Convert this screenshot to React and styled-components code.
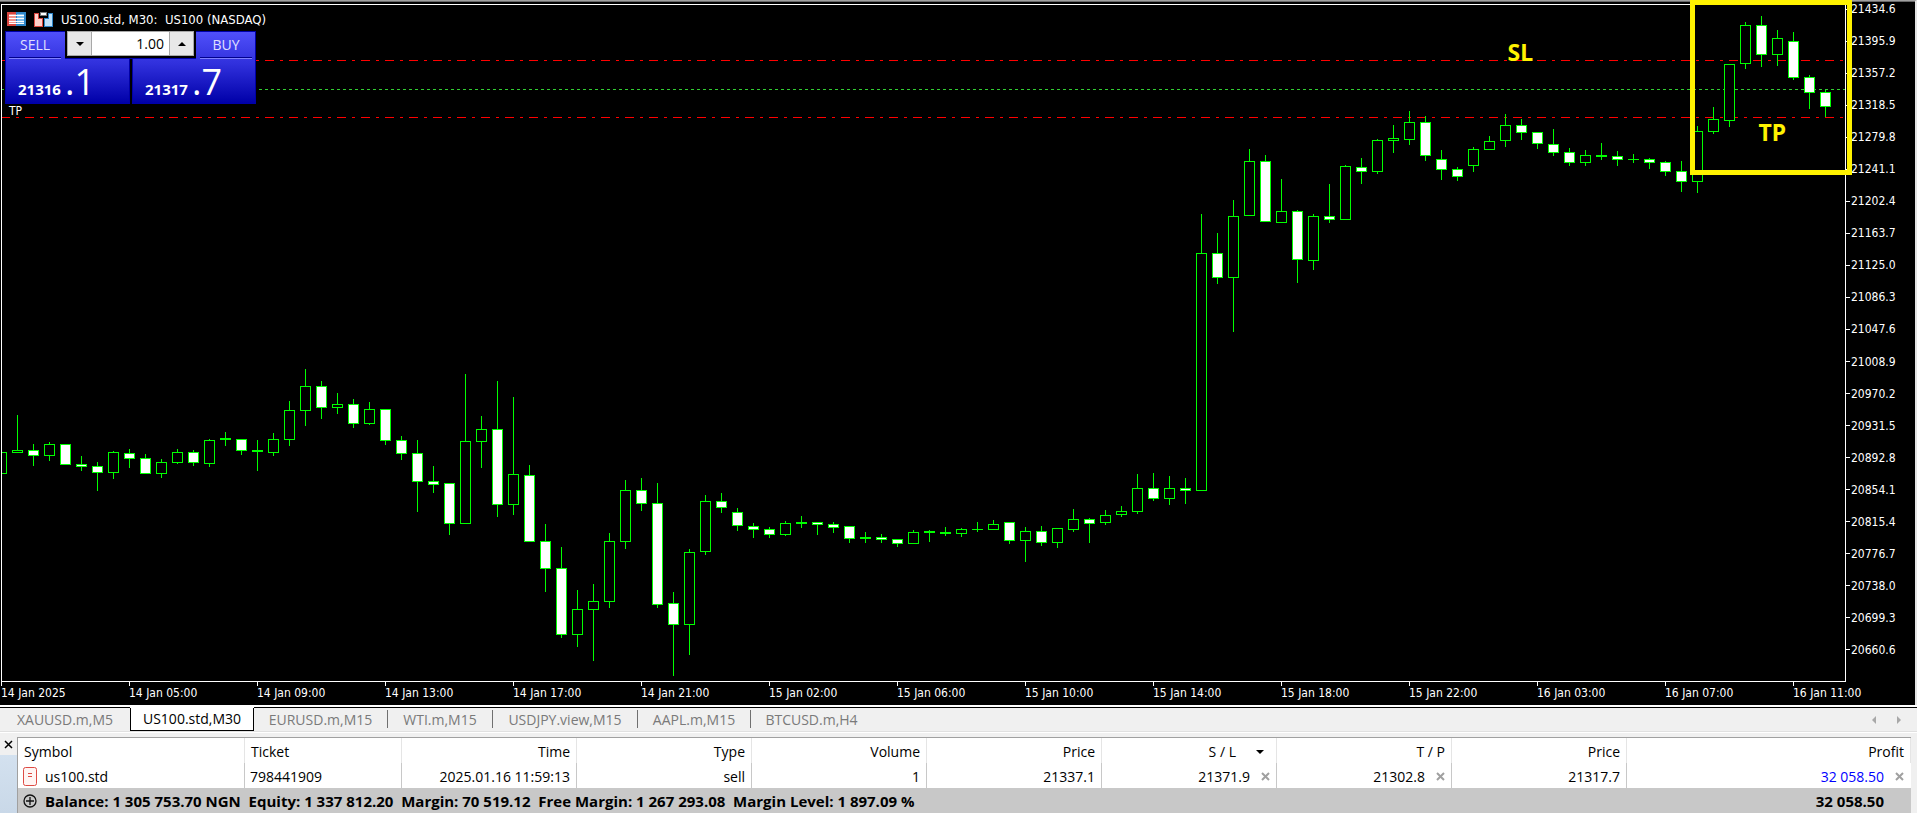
import React, { useState } from "react";
import styled, { createGlobalStyle } from "styled-components";

const GlobalStyle = createGlobalStyle`
  * {
    box-sizing: border-box;
  }
  body {
    margin: 0;
    background: #f0f0f0;
    font-family: "Open Sans", "Noto Sans", sans-serif;
    font-size: 14px;
    color: #000;
  }
  button, input {
    font: inherit;
    margin: 0;
    padding: 0;
    border: 0;
  }
`;

const Page = styled.div`
  min-height: 100vh;
  display: flex;
  flex-direction: column;
`;

/* ---------- chart ---------- */

const ChartWindow = styled.section`
  position: relative;
  flex: 1;
  min-height: 400px;
  display: flex;
  flex-direction: column;
  background: #000;
  border-top: 1px solid #a0a0a0;
  border-right: 2px solid #e3e3e3;
  box-shadow: inset 0 1px 0 #696969;
  padding-top: 1px;
  color: #fff;
  font-family: "DejaVu Sans Condensed", "DejaVu Sans", sans-serif;
  font-size: 12px;
`;

const ChartBody = styled.div`
  flex: 1;
  display: flex;
`;

const Plot = styled.div`
  position: relative;
  flex: 1;
  min-width: 0;
  margin: 2px 0 0 1px;
  border: 1px solid #fff;
`;

const PlotCanvas = styled.svg`
  position: absolute;
  top: 0;
  left: 0;
  width: 100%;
  height: 100%;
  shape-rendering: crispEdges;
`;

const PriceScale = styled.ul`
  width: 69px;
  margin: 0;
  padding: 1px 0 26px;
  list-style: none;
  display: flex;
  flex-direction: column;
  justify-content: space-between;
`;

const PriceLabel = styled.li`
  height: 12px;
  line-height: 12px;
  display: flex;
  align-items: center;
  gap: 1px;
  &::before {
    content: "";
    width: 4px;
    height: 1px;
    background: #fff;
  }
`;

const TimeScale = styled.ul`
  height: 23px;
  margin: 0;
  padding: 0;
  list-style: none;
  display: flex;
  justify-content: flex-end;
  overflow: hidden;
`;

const TimeLabel = styled.li`
  flex: 0 0 128px;
  line-height: 14px;
  white-space: nowrap;
  &::before {
    content: "";
    display: block;
    width: 1px;
    height: 4px;
    background: #fff;
  }
  &:last-child {
    flex-basis: 122px;
  }
`;

const ChartTitle = styled.header`
  position: absolute;
  top: 9px;
  left: 7px;
  height: 18px;
  display: flex;
  align-items: center;
  gap: 8px;
  font-size: 13px;
  white-space: pre;
`;

const OrderLabel = styled.span`
  position: absolute;
  top: 103px;
  left: 9px;
  line-height: 14px;
`;

const Highlight = styled.div`
  position: absolute;
  top: -1px;
  right: 63px;
  width: 162px;
  height: 175px;
  border: 5px solid #fff200;
`;

const Note = styled.span`
  position: absolute;
  top: ${(props) => props.$top}px;
  right: ${(props) => props.$right}px;
  color: #fff200;
  font: bold 23px/28px "Noto Sans", sans-serif;
`;

/* ---------- one click trading ---------- */

const TradePanel = styled.div`
  position: absolute;
  top: 30px;
  left: 5px;
  width: 251px;
  height: 73px;
  display: grid;
  grid-template-columns: 125px 124px;
  gap: 2px;
  background: #000;
  font-family: "Open Sans", "Noto Sans", sans-serif;
  font-size: 14px;
`;

const DealButton = styled.button`
  display: flex;
  flex-direction: column;
  align-items: ${(props) => (props.$side === "buy" ? "flex-end" : "flex-start")};
  border: 1px solid #0000a8;
  background: linear-gradient(#5050fa, #3030dc 45%, #0000a8);
  color: #fff;
`;

const DealName = styled.span`
  width: 52px;
  height: 27px;
  margin: 0 3px;
  line-height: 25px;
  text-align: center;
  color: #e0e0ff;
  border-bottom: 1px solid #8080ff;
  box-shadow: inset 0 -1px 0 #00008c;
`;

const Quote = styled.span`
  width: 100%;
  height: 44px;
  padding-left: 12px;
  display: flex;
  align-items: baseline;
`;

const QuoteMain = styled.b`
  font-size: 15px;
  width: 47px;
  text-align: left;
`;

const QuoteTick = styled.span`
  font-size: 36px;
  line-height: 46px;
`;

const VolumeBox = styled.div`
  position: absolute;
  top: 0;
  left: 60px;
  width: 131px;
  height: 28px;
  padding: 0 2px 2px;
  background: #000;
  border-bottom: 1px solid #0000a8;
  display: flex;
`;

const VolumeInput = styled.input`
  flex: 1;
  min-width: 0;
  padding: 0 5px;
  background: #fff;
  color: #000;
  text-align: right;
  border: solid #a8a8a8;
  border-width: 1px 0;
  outline: none;
`;

const StepButton = styled.button`
  width: 25px;
  background: #e8e8e8;
  border: 1px solid #a8a8a8;
  display: flex;
  align-items: center;
  justify-content: center;
`;

/* ---------- chart tabs ---------- */

const TabBar = styled.nav`
  margin-top: 2px;
  height: 25px;
  display: flex;
  align-items: stretch;
  background: #f0f0f0;
  border-top: 1px solid #000;
  border-bottom: 1px solid #e0e0e0;
  box-shadow: 0 -2px 0 #fff, 0 1px 0 #fff;
`;

const Tab = styled.button`
  width: ${(props) => props.$width}px;
  height: 23px;
  line-height: 22px;
  white-space: nowrap;
  color: ${(props) => (props.$current ? "#000" : "#7a7a7a")};
  background: ${(props) => (props.$current ? "#fff" : "transparent")};
  border: ${(props) => (props.$current ? "1px solid #000" : "0")};
  border-top: 0;
  box-shadow: ${(props) => (props.$current ? "0 -1px 0 #fff" : "none")};
`;

const TabDivider = styled.span`
  width: 1px;
  margin: 2px 0 3px;
  background: #707070;
`;

const TabScroll = styled.div`
  margin-left: auto;
  padding-right: 8px;
  display: flex;
  align-items: center;
  gap: 5px;
`;

const ScrollButton = styled.button`
  width: 20px;
  height: 20px;
  background: none;
  display: flex;
  align-items: center;
  justify-content: center;
`;

/* ---------- terminal ---------- */

const Terminal = styled.section`
  margin-top: 5px;
  padding-right: 6px;
  display: flex;
`;

const Side = styled.div`
  width: 17px;
  background: linear-gradient(#f0f0f0 18px, #d3e1ef 18px, #c9d8e8);
`;

const CloseButton = styled.button`
  width: 16px;
  height: 14px;
  background: none;
  display: flex;
  align-items: center;
  justify-content: center;
`;

const Trades = styled.table`
  flex: 1;
  width: 100%;
  table-layout: fixed;
  border-collapse: separate;
  border-spacing: 0;
  background: #fff;
  border-top: 1px solid #a0a0a0;
  border-left: 1px solid #a0a0a0;
`;

const Head = styled.th`
  height: 25px;
  padding: 2px 6px 0;
  line-height: 20px;
  font-weight: normal;
  white-space: nowrap;
  text-align: ${(props) => (props.$left ? "left" : "right")};
  border-right: 1px solid #e5e5e5;
`;

const Cell = styled.td`
  height: 25px;
  padding: 2px 6px 0 5px;
  line-height: 20px;
  white-space: nowrap;
  border-right: 1px solid ${(props) => (props.$last ? "transparent" : "#c8c8c8")};
`;

const CellContent = styled.span`
  display: flex;
  align-items: center;
  justify-content: ${(props) => (props.$left ? "flex-start" : "flex-end")};
  gap: ${(props) => props.$gap || 8}px;
  color: ${(props) => (props.$profit ? "#0000ff" : "inherit")};
`;

const RemoveButton = styled.button`
  width: 12px;
  height: 14px;
  background: none;
  display: flex;
  align-items: center;
  justify-content: flex-end;
`;

const SumCell = styled.td`
  height: 25px;
  padding: 0 27px 0 5px;
  line-height: 20px;
  font-size: 15px;
  font-weight: bold;
  text-align: right;
  white-space: pre;
  background: #c8c8c8;
`;

// [high, top, bottom, low, filled], one row per 30 minute bar
const bars = [
  [452, 452, 474, 474, 0], [415, 450, 453, 453, 0], [444, 450, 456, 466, 1],
  [442, 444, 456, 461, 0], [444, 444, 465, 465, 1], [456, 464, 467, 471, 1],
  [462, 466, 473, 491, 1], [451, 452, 473, 479, 0], [449, 453, 459, 468, 1],
  [454, 458, 474, 474, 1], [459, 462, 474, 478, 0], [449, 452, 463, 464, 0],
  [450, 452, 463, 466, 1], [439, 440, 464, 467, 0], [432, 438, 440, 446, 0],
  [439, 439, 451, 455, 1], [440, 450, 452, 471, 0], [433, 439, 453, 456, 0],
  [401, 410, 440, 446, 0], [369, 386, 411, 426, 0], [381, 386, 408, 419, 1],
  [393, 404, 408, 414, 0], [399, 404, 424, 428, 1], [402, 409, 424, 425, 0],
  [409, 409, 441, 445, 1], [436, 440, 454, 460, 1], [440, 453, 482, 512, 1],
  [466, 481, 485, 493, 1], [483, 483, 524, 535, 1], [374, 441, 524, 524, 0],
  [416, 429, 442, 468, 0], [381, 429, 505, 517, 1], [397, 474, 505, 515, 0],
  [465, 475, 542, 542, 1], [524, 541, 569, 592, 1], [547, 568, 635, 638, 1],
  [590, 609, 635, 647, 0], [584, 601, 610, 661, 0], [533, 541, 602, 608, 0],
  [480, 490, 542, 549, 0], [478, 490, 504, 511, 1], [483, 503, 605, 608, 1],
  [592, 603, 625, 676, 1], [549, 552, 625, 655, 0], [495, 501, 552, 555, 0],
  [493, 501, 508, 513, 1], [508, 512, 526, 531, 1], [523, 526, 530, 538, 1],
  [527, 529, 535, 538, 1], [521, 523, 535, 536, 0], [516, 522, 524, 528, 0],
  [522, 522, 525, 535, 1], [522, 524, 528, 533, 1], [526, 526, 539, 543, 1],
  [532, 537, 539, 543, 0], [534, 537, 540, 543, 1], [539, 539, 544, 547, 1],
  [530, 532, 544, 544, 0], [530, 531, 533, 542, 0], [527, 532, 534, 536, 0],
  [528, 529, 534, 537, 0], [522, 529, 530, 532, 0], [520, 524, 530, 530, 0],
  [522, 522, 541, 544, 1], [527, 531, 541, 562, 0], [526, 531, 543, 546, 1],
  [528, 528, 543, 548, 0], [509, 519, 530, 532, 0], [518, 519, 524, 543, 1],
  [510, 515, 523, 525, 0], [506, 511, 515, 517, 0], [474, 488, 512, 514, 0],
  [473, 488, 499, 501, 1], [476, 488, 499, 505, 0], [478, 488, 491, 504, 1],
  [214, 253, 491, 491, 0], [233, 253, 278, 284, 1], [200, 216, 278, 332, 0],
  [149, 161, 216, 216, 0], [155, 161, 222, 222, 1], [179, 211, 223, 223, 0],
  [210, 211, 260, 283, 1], [214, 216, 261, 270, 0], [184, 216, 220, 223, 1],
  [165, 166, 220, 220, 0], [158, 167, 172, 184, 1], [139, 140, 172, 174, 0],
  [125, 138, 141, 153, 0], [111, 122, 140, 145, 0], [116, 122, 156, 161, 1],
  [150, 159, 170, 180, 1], [167, 169, 177, 181, 1], [147, 149, 166, 172, 0],
  [136, 141, 150, 150, 0], [114, 125, 141, 147, 0], [119, 125, 133, 140, 1],
  [132, 132, 144, 149, 1], [129, 144, 153, 156, 1], [148, 152, 163, 166, 1],
  [150, 155, 163, 166, 0], [143, 155, 157, 160, 0], [151, 156, 160, 166, 1],
  [154, 159, 160, 163, 0], [158, 159, 163, 169, 1], [161, 162, 172, 176, 1],
  [161, 171, 182, 192, 1], [126, 131, 182, 193, 0], [107, 119, 132, 134, 0],
  [64, 64, 121, 127, 0], [22, 25, 64, 69, 0], [16, 25, 55, 67, 1],
  [30, 38, 55, 66, 0], [32, 41, 78, 80, 1], [75, 77, 93, 109, 1],
  [90, 92, 107, 117, 1],
];

const BAR_STEP = 16;
const LAST_BAR_OFFSET = 20;
const TOP_OFFSET = 5;

const prices = [
  "21434.6", "21395.9", "21357.2", "21318.5", "21279.8", "21241.1", "21202.4",
  "21163.7", "21125.0", "21086.3", "21047.6", "21008.9", "20970.2", "20931.5",
  "20892.8", "20854.1", "20815.4", "20776.7", "20738.0", "20699.3", "20660.6",
];

const times = [
  "14 Jan 2025", "14 Jan 05:00", "14 Jan 09:00", "14 Jan 13:00", "14 Jan 17:00",
  "14 Jan 21:00", "15 Jan 02:00", "15 Jan 06:00", "15 Jan 10:00", "15 Jan 14:00",
  "15 Jan 18:00", "15 Jan 22:00", "16 Jan 03:00", "16 Jan 07:00", "16 Jan 11:00",
];

const tabs = [
  { name: "XAUUSD.m,M5", width: 130 },
  { name: "US100.std,M30", width: 124 },
  { name: "EURUSD.m,M15", width: 133, divider: true },
  { name: "WTI.m,M15", width: 104, divider: true },
  { name: "USDJPY.view,M15", width: 144, divider: true },
  { name: "AAPL.m,M15", width: 112, divider: true },
  { name: "BTCUSD.m,H4", width: 121 },
];

const columns = [227, 157, 175, 175, 175, 175, 175, 175, 175];

const Candle = ({ x, bar: [high, top, bottom, low, filled] }) => (
  <g>
    <rect x={x} y={high} width="1" height={low - high} fill="#00ff00" />
    <rect x={x - 5} y={top} width="11" height={bottom - top} fill="#00ff00" />
    {bottom - top > 2 && (
      <rect
        x={x - 4}
        y={top + 1}
        width="9"
        height={bottom - top - 2}
        fill={filled ? "#fff" : "#000"}
      />
    )}
  </g>
);

const DepthIcon = () => (
  <svg width="19" height="14" viewBox="0 0 19 14" shapeRendering="crispEdges">
    <rect width="10" height="14" rx="1" fill="#d8453e" />
    <rect x="9" width="10" height="14" rx="1" fill="#2f86c8" />
    <path d="M2 2h7v10H2z" fill="#f0938c" />
    <path d="M10 2h7v10h-7z" fill="#7fbdec" />
    <path d="M2 3h15v1H2zM2 6h15v1H2zM2 9h15v1H2zM2 11h15v1H2z" fill="#fff" />
  </svg>
);

const OneClickIcon = () => (
  <svg width="19" height="15" viewBox="0 0 19 15" shapeRendering="crispEdges">
    <path d="M0 1h5v5h4v9H0z" fill="#d8453e" />
    <path d="M1 2h3v5h4v7H1z" fill="#ffd0ca" />
    <path d="M14 1h5v14h-9V6h4z" fill="#2f86c8" />
    <path d="M15 2h3v12h-7V7h4z" fill="#bfe2fb" />
    <path d="M6 0h7v4H6z" fill="#777" />
    <path d="M7 1h5v2H7z" fill="#fff" />
  </svg>
);

const Arrow = ({ d, width = 8, height = 4, color = "#000" }) => (
  <svg width={width} height={height} viewBox={`0 0 ${width} ${height}`} aria-hidden="true">
    <path d={d} fill={color} />
  </svg>
);

const Cross = ({ color = "#a0a0a0", width = 2 }) => (
  <svg width="9" height="9" viewBox="0 0 9 9" aria-hidden="true">
    <path d="M1 1l7 7M8 1l-7 7" stroke={color} strokeWidth={width} fill="none" />
  </svg>
);

const SellIcon = () => (
  <svg width="14" height="19" viewBox="0 0 14 19" aria-hidden="true">
    <rect x="0.5" y="0.5" width="13" height="18" rx="2" fill="#fff4f3" stroke="#dd4b44" />
    <path d="M5 6h4v1H5zM5 9h4v1H5z" fill="#dd4b44" />
  </svg>
);

const PlusIcon = () => (
  <svg width="14" height="14" viewBox="0 0 14 14" aria-hidden="true">
    <circle cx="7" cy="7" r="6" fill="none" stroke="#111" strokeWidth="1.3" />
    <path d="M7 3v8M3 7h8" stroke="#111" strokeWidth="1.3" />
  </svg>
);

const Chart = () => {
  const [volume, setVolume] = useState("1.00");
  const step = (diff) => {
    setVolume(Math.max(0.01, (parseFloat(volume) || 0) + diff).toFixed(2));
  };

  return (
    <ChartWindow>
      <ChartBody>
        <Plot>
          <PlotCanvas role="img" aria-label="US100.std M30 candles">
            <g strokeWidth="1">
              <line x1="-1" y1="55.5" x2="100%" y2="55.5" stroke="#ff0000" strokeDasharray="9 6 3 6" />
              <line x1="-1" y1="84.5" x2="100%" y2="84.5" stroke="#32cd32" strokeDasharray="3 3" />
              <line x1="-1" y1="112.5" x2="100%" y2="112.5" stroke="#ff0000" strokeDasharray="9 6 3 6" />
            </g>
            <svg x="100%" y={-TOP_OFFSET} overflow="visible">
              {bars.map((bar, i) => (
                <Candle
                  key={i}
                  bar={bar}
                  x={-LAST_BAR_OFFSET - (bars.length - 1 - i) * BAR_STEP}
                />
              ))}
            </svg>
          </PlotCanvas>
        </Plot>
        <PriceScale>
          {prices.map((price) => (
            <PriceLabel key={price}>{price}</PriceLabel>
          ))}
        </PriceScale>
      </ChartBody>
      <TimeScale>
        {times.map((time) => (
          <TimeLabel key={time}>{time}</TimeLabel>
        ))}
      </TimeScale>

      <ChartTitle>
        <DepthIcon />
        <OneClickIcon />
        <span>US100.std, M30:  US100 (NASDAQ)</span>
      </ChartTitle>
      <TradePanel>
        <DealButton $side="sell">
          <DealName>SELL</DealName>
          <Quote>
            <QuoteMain>21316</QuoteMain>
            <QuoteTick>.1</QuoteTick>
          </Quote>
        </DealButton>
        <DealButton $side="buy">
          <DealName>BUY</DealName>
          <Quote>
            <QuoteMain>21317</QuoteMain>
            <QuoteTick>.7</QuoteTick>
          </Quote>
        </DealButton>
        <VolumeBox>
          <StepButton aria-label="Decrease volume" onClick={() => step(-0.01)}>
            <Arrow d="M0 0h8l-4 4z" />
          </StepButton>
          <VolumeInput
            aria-label="Volume"
            value={volume}
            onChange={(e) => setVolume(e.target.value)}
          />
          <StepButton aria-label="Increase volume" onClick={() => step(0.01)}>
            <Arrow d="M0 4h8l-4-4z" />
          </StepButton>
        </VolumeBox>
      </TradePanel>
      <OrderLabel>TP</OrderLabel>
      <Highlight />
      <Note $top={37} $right={382}>SL</Note>
      <Note $top={117} $right={129}>TP</Note>
    </ChartWindow>
  );
};

const ChartTabs = () => {
  const [current, setCurrent] = useState("US100.std,M30");
  return (
    <TabBar>
      {tabs.map(({ name, width, divider }) => (
        <React.Fragment key={name}>
          <Tab $width={width} $current={name === current} onClick={() => setCurrent(name)}>
            {name}
          </Tab>
          {divider && <TabDivider />}
        </React.Fragment>
      ))}
      <TabScroll>
        <ScrollButton aria-label="Scroll left">
          <Arrow width={4} height={8} d="M4 0v8l-4-4z" color="#a8a8a8" />
        </ScrollButton>
        <ScrollButton aria-label="Scroll right">
          <Arrow width={4} height={8} d="M0 0v8l4-4z" color="#a8a8a8" />
        </ScrollButton>
      </TabScroll>
    </TabBar>
  );
};

const Remove = ({ label }) => (
  <RemoveButton aria-label={label}>
    <Cross />
  </RemoveButton>
);

const TradeTerminal = () => (
  <Terminal>
    <Side>
      <CloseButton aria-label="Close">
        <Cross color="#000" width={1.5} />
      </CloseButton>
    </Side>
    <Trades>
      <colgroup>
        {columns.map((width, i) => (
          <col key={i} width={width} />
        ))}
        <col />
      </colgroup>
      <thead>
        <tr>
          <Head $left>Symbol</Head>
          <Head $left>Ticket</Head>
          <Head>Time</Head>
          <Head>Type</Head>
          <Head>Volume</Head>
          <Head>Price</Head>
          <Head>
            <CellContent $gap={20}>
              S / L
              <Arrow width={14} d="M0 0h8l-4 4z" />
            </CellContent>
          </Head>
          <Head>T / P</Head>
          <Head>Price</Head>
          <Head>Profit</Head>
        </tr>
      </thead>
      <tbody>
        <tr>
          <Cell>
            <CellContent $left>
              <SellIcon />
              us100.std
            </CellContent>
          </Cell>
          <Cell>798441909</Cell>
          <Cell><CellContent>2025.01.16 11:59:13</CellContent></Cell>
          <Cell><CellContent>sell</CellContent></Cell>
          <Cell><CellContent>1</CellContent></Cell>
          <Cell><CellContent>21337.1</CellContent></Cell>
          <Cell>
            <CellContent>
              21371.9 <Remove label="Remove stop loss" />
            </CellContent>
          </Cell>
          <Cell>
            <CellContent>
              21302.8 <Remove label="Remove take profit" />
            </CellContent>
          </Cell>
          <Cell><CellContent>21317.7</CellContent></Cell>
          <Cell $last>
            <CellContent $profit>
              32 058.50 <Remove label="Close position" />
            </CellContent>
          </Cell>
        </tr>
      </tbody>
      <tfoot>
        <tr>
          <SumCell colSpan={9}>
            <CellContent $left>
              <PlusIcon />
              {"Balance: 1 305 753.70 NGN  Equity: 1 337 812.20  Margin: 70 519.12  Free Margin: 1 267 293.08  Margin Level: 1 897.09 %"}
            </CellContent>
          </SumCell>
          <SumCell>32 058.50</SumCell>
        </tr>
      </tfoot>
    </Trades>
  </Terminal>
);

export default () => (
  <Page>
    <GlobalStyle />
    <Chart />
    <ChartTabs />
    <TradeTerminal />
  </Page>
);
